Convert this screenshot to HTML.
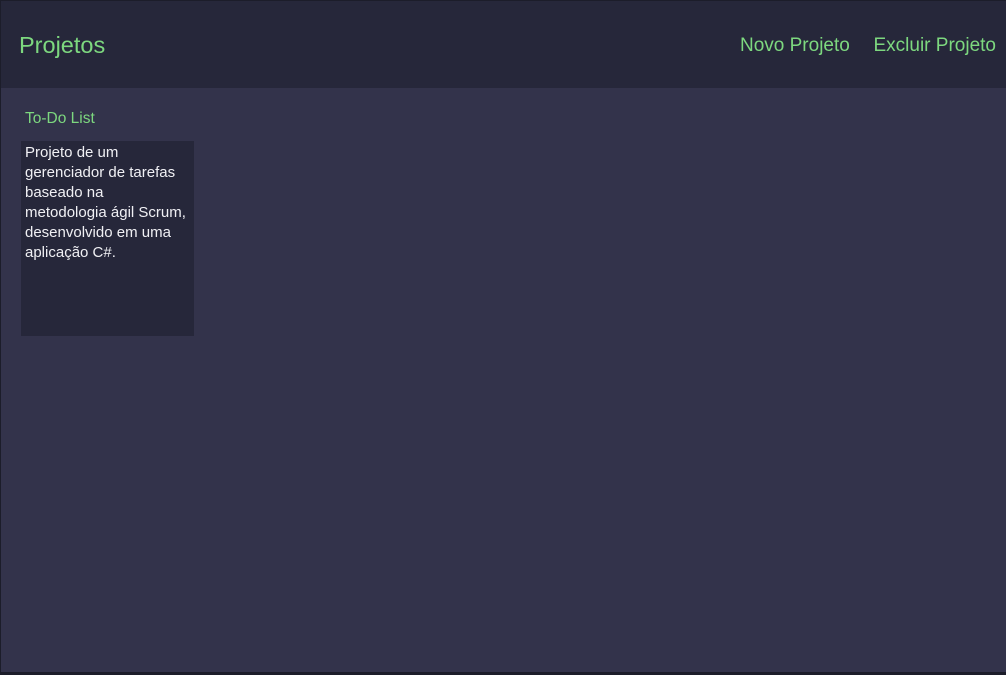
<!DOCTYPE html>
<html><head><style>
html,body{margin:0;padding:0;width:1006px;height:675px;overflow:hidden;background:#1c1d2a;font-family:"Liberation Sans",sans-serif}
.win{position:absolute;left:1px;top:1px;width:1005px;height:671px;background:#33334b}
.hdr{position:absolute;left:0;top:0;width:1005px;height:87px;background:#26273a}
.t{position:absolute;left:18px;top:31px;font-size:23.5px;color:#7dd87f}
.n{position:absolute;top:34px;font-size:19px;color:#7dd87f;white-space:nowrap}
.h{position:absolute;left:24px;top:109px;font-size:15.5px;color:#7dd87f}
.c{position:absolute;left:20px;top:140px;width:173px;height:195px;background:#26273a;color:#f0f0f4;font-size:15px;line-height:20px;box-sizing:border-box;padding:2px 4px;white-space:nowrap}
</style></head><body>
<div class="win">
<div class="hdr"><div class="t">Projetos</div><div class="n" style="left:739px">Novo Projeto</div><div class="n" style="right:10px">Excluir Projeto</div></div>
<div class="h">To-Do List</div>
<div class="c">Projeto de um<br>gerenciador de tarefas<br>baseado na<br>metodologia ágil Scrum,<br>desenvolvido em uma<br>aplicação C#.</div>
</div>
</body></html>
